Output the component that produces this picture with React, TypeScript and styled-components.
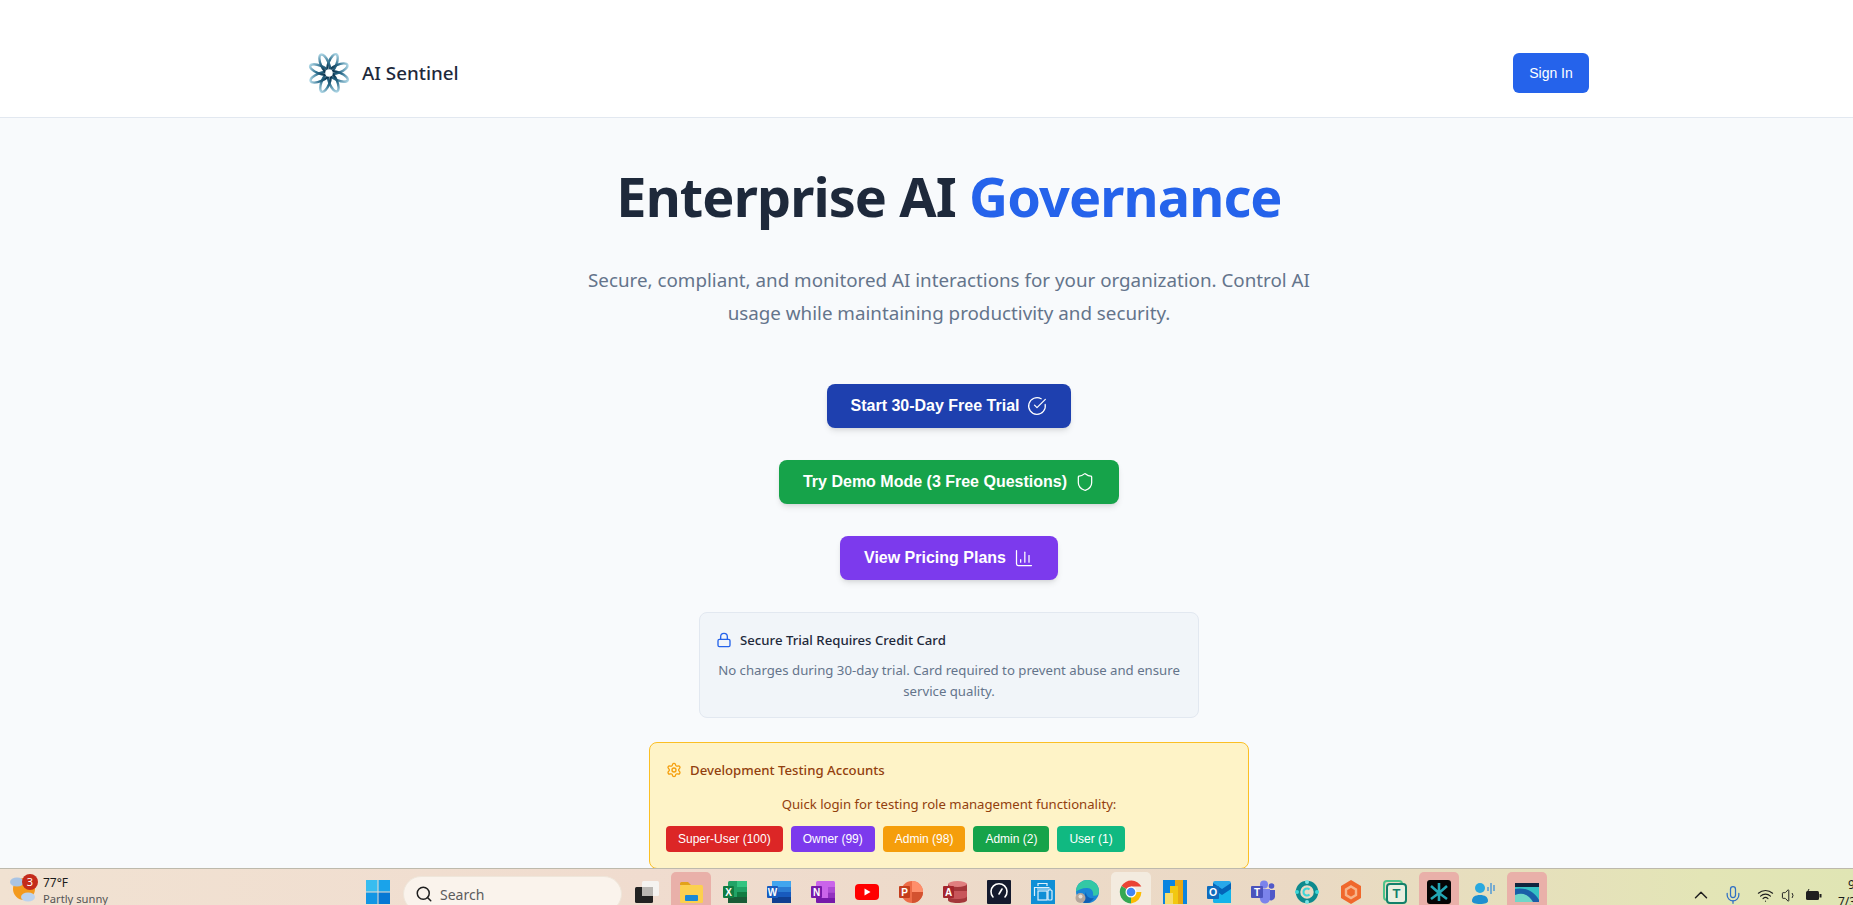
import styled, { createGlobalStyle } from "styled-components";
import {
  CircleCheckBig,
  Shield,
  ChartColumn,
  Lock,
  Settings,
  Search,
  ChevronUp,
  Mic,
  Wifi,
  Volume1,
} from "lucide-react";
import { ReactNode } from "react";

const GlobalStyle = createGlobalStyle`
  html, body {
    margin: 0;
    padding: 0;
    overflow: hidden;
    background: #f8fafc;
  }
  * {
    box-sizing: border-box;
  }
`;

const uiFont = `"Noto Sans", "Open Sans", sans-serif`;
const buttonFont = `"Liberation Sans", Arial, sans-serif`;

const Screen = styled.div`
  height: 905px;
  display: flex;
  flex-direction: column;
  overflow: hidden;
`;

const Viewport = styled.div`
  flex: 1;
  min-height: 0;
  overflow: hidden;
`;

// the captured desktop was wider than the picture, so the page centre sits right of the middle
const Page = styled.div`
  width: 1898px;
  font-family: ${uiFont};
`;

const Header = styled.header`
  height: 118px;
  background: #fff;
  border-bottom: 1px solid #e2e8f0;
  padding: 28px 309px 0 308px;
  display: flex;
  align-items: center;
  justify-content: space-between;
`;

const Brand = styled.div`
  display: flex;
  align-items: center;
  gap: 12px;
`;

const BrandName = styled.span`
  font-size: 18.8px;
  font-weight: 500;
  color: #1e293b;
`;

const SignIn = styled.button`
  width: 76px;
  height: 40px;
  border: 0;
  border-radius: 6px;
  background: #2563eb;
  color: #fff;
  font-family: ${buttonFont};
  font-size: 14px;
`;

const Hero = styled.main`
  display: flex;
  flex-direction: column;
  align-items: center;
  padding-top: 36px;
`;

const Title = styled.h1`
  margin: 0;
  font-size: 54px;
  line-height: 84px;
  letter-spacing: -0.9px;
  font-weight: 700;
  color: #1e293b;
`;

const Accent = styled.span`
  color: #2563eb;
`;

const Lead = styled.p`
  margin: 26px 0 0;
  width: 768px;
  font-size: 18.8px;
  line-height: 33px;
  text-align: center;
  color: #64748b;
`;

const Actions = styled.div`
  margin-top: 54px;
  display: flex;
  flex-direction: column;
  align-items: center;
  gap: 32px;
`;

const CtaButton = styled.button<{ $bg: string }>`
  height: 44px;
  padding: 0 24px;
  border: 0;
  border-radius: 8px;
  background: ${(p) => p.$bg};
  color: #fff;
  font-family: ${buttonFont};
  font-size: 16px;
  font-weight: 700;
  display: flex;
  align-items: center;
  gap: 8px;
  box-shadow: 0 4px 6px -1px rgba(0, 0, 0, 0.1), 0 2px 4px -2px rgba(0, 0, 0, 0.1);
`;

const SecureCard = styled.section`
  margin-top: 32px;
  width: 500px;
  height: 106px;
  padding: 16px;
  background: #f1f5f9;
  border: 1px solid #e2e8f0;
  border-radius: 8px;
`;

const CardTitle = styled.div<{ $color: string }>`
  display: flex;
  align-items: center;
  gap: 8px;
  font-size: 13.2px;
  line-height: 22px;
  font-weight: 500;
  color: ${(p) => p.$color};
`;

const SecureText = styled.p`
  margin: 9px 0 0;
  font-size: 13.2px;
  line-height: 21px;
  text-align: center;
  color: #64748b;
`;

const DevCard = styled.section`
  margin-top: 24px;
  width: 600px;
  height: 127px;
  padding: 16px;
  background: #fef3c7;
  border: 1px solid #fbbf24;
  border-radius: 8px;
`;

const DevText = styled.p`
  margin: 13px 0 0;
  font-size: 13.15px;
  line-height: 20px;
  text-align: center;
  color: #92400e;
`;

const RoleRow = styled.div`
  margin-top: 12px;
  display: flex;
  gap: 8px;
`;

const RoleButton = styled.button<{ $bg: string }>`
  height: 26px;
  padding: 0 12px;
  border: 0;
  border-radius: 4px;
  background: ${(p) => p.$bg};
  color: #fff;
  font-family: ${buttonFont};
  font-size: 12px;
`;

const Taskbar = styled.footer`
  flex: 0 0 37px;
  border-top: 1px solid #bdb9ac;
  background: linear-gradient(90deg, #f1e2d2 0%, #f0dccf 35%, #ead9c4 70%, #e3e5b6 92%, #e0e5b4 100%);
  display: flex;
  align-items: flex-start;
  overflow: hidden;
  font-family: ${uiFont};
`;

const Weather = styled.div`
  position: relative;
  width: 358px;
  padding: 6px 0 0 10px;
  display: flex;
  gap: 7px;
`;

const Badge = styled.span`
  position: absolute;
  left: 22px;
  top: 5px;
  width: 16px;
  height: 16px;
  border-radius: 50%;
  background: #c42b1c;
  color: #fff;
  font-size: 11px;
  line-height: 16px;
  text-align: center;
`;

const WeatherText = styled.div`
  font-size: 12px;
  line-height: 16px;
  color: #1a1a1a;
`;

const WeatherSub = styled.div`
  font-size: 11.2px;
  color: #555;
`;

const Tile = styled.div<{ $tone?: "active" | "light" }>`
  flex: 0 0 40px;
  height: 40px;
  margin-top: 3px;
  padding-top: 8px;
  display: flex;
  justify-content: center;
  align-items: flex-start;
  border-radius: 5px;
  background: ${(p) =>
    p.$tone === "active" ? "#e9b0a9" : p.$tone === "light" ? "#f3ebdf" : "transparent"};
`;

const SearchBox = styled.div`
  flex: 0 0 219px;
  height: 36px;
  margin: 7px 5px 0 5px;
  padding-left: 11px;
  border-radius: 18px;
  background: #faf3ec;
  border: 1px solid #efe6da;
  display: flex;
  align-items: center;
  gap: 7px;
  font-size: 14px;
  color: #5c5c5c;
`;

const AppStrip = styled.div`
  display: flex;
  gap: 4px;
`;

const Tray = styled.div`
  margin-left: auto;
  padding-top: 11px;
  display: flex;
  align-items: center;
  color: #1f1f1f;
`;

const TrayItem = styled.span<{ $width: number; $color?: string }>`
  width: ${(p) => p.$width}px;
  display: flex;
  color: ${(p) => p.$color ?? "inherit"};
`;

const Clock = styled.div`
  width: 15px;
  margin-top: -4px;
  font-size: 12px;
  line-height: 17px;
  white-space: nowrap;
  color: #1a1a1a;
  overflow: hidden;
`;

const ClockTime = styled.div`
  padding-left: 10px;
`;

function LogoMark() {
  const petals = [0, 45, 90, 135, 180, 225, 270, 315];
  return (
    <svg width="42" height="42" viewBox="0 0 42 42" fill="none">
      <defs>
        <radialGradient id="petal" cx="21" cy="21" r="21" gradientUnits="userSpaceOnUse">
          <stop offset="0.15" stopColor="#0d3650" />
          <stop offset="0.55" stopColor="#2f708f" />
          <stop offset="1" stopColor="#b5dcea" />
        </radialGradient>
      </defs>
      {petals.map((a) => (
        <ellipse
          key={a}
          cx="24.500"
          cy="11.500"
          rx="4"
          ry="10"
          stroke="url(#petal)"
          strokeWidth="2.400"
          transform={`rotate(${a} 21 21) rotate(22 24.500 11.500)`}
        />
      ))}
      <circle cx="21" cy="21" r="3.800" fill="#fff" />
    </svg>
  );
}

function Icon({ children }: { children: ReactNode }) {
  return (
    <svg width="24" height="24" viewBox="0 0 24 24">
      {children}
    </svg>
  );
}

const apps: { name: string; tone?: "active" | "light"; art: ReactNode }[] = [
  {
    name: "Task view",
    art: (
      <>
        <rect x="7" y="1" width="17" height="15" rx="1.5" fill="#f5f3f0" />
        <rect x="0" y="7" width="18" height="16" rx="1.5" fill="#222" />
        <rect x="7" y="7" width="11" height="9" fill="#b9b6b2" />
      </>
    ),
  },
  {
    name: "Explorer",
    tone: "active",
    art: (
      <>
        <path d="M1 3.5A1.5 1.5 0 0 1 2.500 2H9l3 3h-11z" fill="#e3a21a" />
        <rect x="1" y="5" width="23" height="18" rx="1.5" fill="#fcd04f" />
        <rect x="6" y="15" width="13" height="6" rx="1" fill="#1a88d6" />
      </>
    ),
  },
  {
    name: "Excel",
    art: (
      <>
        <rect x="5" y="1" width="19" height="22" rx="1.5" fill="#21a366" />
        <rect x="14" y="1" width="10" height="6" fill="#33c481" />
        <rect x="14" y="12" width="10" height="5.500" fill="#107c41" />
        <rect x="5" y="17" width="19" height="6" fill="#185c37" />
        <rect x="0" y="6" width="11" height="12" rx="1" fill="#107c41" />
        <text x="5.500" y="15.500" fontSize="10" fontWeight="700" fill="#fff" textAnchor="middle" fontFamily="Liberation Sans">X</text>
      </>
    ),
  },
  {
    name: "Word",
    art: (
      <>
        <rect x="5" y="1" width="19" height="22" rx="1.5" fill="#2b7cd3" />
        <rect x="5" y="1" width="19" height="6" fill="#41a5ee" />
        <rect x="5" y="12" width="19" height="5.500" fill="#185abd" />
        <rect x="5" y="17" width="19" height="6" fill="#103f91" />
        <rect x="0" y="6" width="11" height="12" rx="1" fill="#185abd" />
        <text x="5.500" y="15.500" fontSize="10" fontWeight="700" fill="#fff" textAnchor="middle" fontFamily="Liberation Sans">W</text>
      </>
    ),
  },
  {
    name: "OneNote",
    art: (
      <>
        <rect x="5" y="1" width="19" height="22" rx="1.5" fill="#ca64ea" />
        <rect x="17" y="7" width="7" height="5.500" fill="#ae4bd5" />
        <rect x="17" y="12.500" width="7" height="5" fill="#9332bf" />
        <rect x="17" y="17.500" width="7" height="5.500" fill="#7719aa" />
        <path d="M5 18h12v5H6.500A1.500 1.500 0 0 1 5 21.500z" fill="#7719aa" />
        <rect x="0" y="6" width="11" height="12" rx="1" fill="#7719aa" />
        <text x="5.500" y="15.500" fontSize="10" fontWeight="700" fill="#fff" textAnchor="middle" fontFamily="Liberation Sans">N</text>
      </>
    ),
  },
  {
    name: "YouTube",
    art: (
      <>
        <rect x="0" y="4" width="24" height="16" rx="4" fill="#f00" />
        <path d="M9.500 8.500v7l6-3.500z" fill="#fff" />
      </>
    ),
  },
  {
    name: "PowerPoint",
    art: (
      <>
        <circle cx="13" cy="12" r="11" fill="#ed6c47" />
        <path d="M13 1a11 11 0 0 1 11 11H13z" fill="#ff8f6b" />
        <path d="M13 12h11a11 11 0 0 1-11 11z" fill="#d35230" />
        <rect x="0" y="6" width="11" height="12" rx="1" fill="#c43e1c" />
        <text x="5.500" y="15.500" fontSize="10" fontWeight="700" fill="#fff" textAnchor="middle" fontFamily="Liberation Sans">P</text>
      </>
    ),
  },
  {
    name: "Access",
    art: (
      <>
        <path d="M5 4v16c0 2 4 3 9.500 3S24 22 24 20V4z" fill="#a4373a" />
        <path d="M5 11v5c0 2 4 3 9.500 3S24 18 24 16v-5z" fill="#c8565a" />
        <ellipse cx="14.500" cy="4" rx="9.500" ry="3" fill="#e07f7f" />
        <rect x="0" y="6" width="11" height="12" rx="1" fill="#a4262c" />
        <text x="5.500" y="15.500" fontSize="10" fontWeight="700" fill="#fff" textAnchor="middle" fontFamily="Liberation Sans">A</text>
      </>
    ),
  },
  {
    name: "Speed",
    art: (
      <>
        <rect x="0" y="0" width="24" height="24" rx="1" fill="#141a2e" />
        <path d="M6 17a8 8 0 1 1 12 0" fill="none" stroke="#fff" strokeWidth="1.600" strokeLinecap="round" />
        <path d="M12 14l3-5" stroke="#fff" strokeWidth="1.600" strokeLinecap="round" />
      </>
    ),
  },
  {
    name: "Print",
    art: (
      <>
        <rect x="0" y="0" width="24" height="24" fill="#0f8fd6" />
        <path d="M7 6V3.500h9V6M3.500 16V7.500h15M6 9h14" fill="none" stroke="#dff1fb" strokeWidth="1.200" />
        <rect x="7" y="11" width="9" height="9" fill="none" stroke="#dff1fb" strokeWidth="1.200" />
        <rect x="17" y="10" width="4" height="10" rx="1" fill="none" stroke="#dff1fb" strokeWidth="1.200" />
      </>
    ),
  },
  {
    name: "Edge",
    art: (
      <>
        <circle cx="12.500" cy="11.500" r="11.500" fill="#1b86d6" />
        <path d="M1 11.500a11.500 11.500 0 0 1 23 0c0 3.500-3 5-6 4 1-5-2.500-8-6.500-7.500-4.500 0-8 2-10.500 3.500z" fill="#33c8a5" />
        <path d="M11 12c0 5 4 7 8 6-2 3-5 5-8 5-2 0-3-.5-4-1z" fill="#0f5fb5" />
        <circle cx="5.500" cy="18" r="5" fill="#b4a69c" />
        <circle cx="5.500" cy="16.500" r="2" fill="#e6ddd5" />
      </>
    ),
  },
  {
    name: "Chrome",
    tone: "light",
    art: (
      <>
        <path d="M12 12L2.500 6A11.500 11.500 0 0 1 22.400 6.500H12z" fill="#ea4335" />
        <path d="M12 12h10.400A11.500 11.500 0 0 1 12 23.500z" fill="#fbbc04" />
        <path d="M12 12v11.500A11.500 11.500 0 0 1 2.500 6z" fill="#34a853" />
        <circle cx="12" cy="12" r="5.500" fill="#fff" />
        <circle cx="12" cy="12" r="4.300" fill="#4285f4" />
      </>
    ),
  },
  {
    name: "Power BI",
    art: (
      <>
        <rect x="0" y="0" width="24" height="24" fill="#0a84e0" />
        <rect x="12" y="0" width="8" height="24" fill="#e8a712" />
        <rect x="7" y="6" width="8" height="18" fill="#f2c811" />
        <rect x="2" y="13" width="8" height="11" fill="#f8dc6a" />
      </>
    ),
  },
  {
    name: "Outlook",
    art: (
      <>
        <rect x="6" y="1" width="18" height="22" rx="2" fill="#28a8ea" />
        <path d="M6 9h18v14H8a2 2 0 0 1-2-2z" fill="#14b3ea" />
        <path d="M6 3l9 6 9-6v6l-9 6-9-6z" fill="#0364b8" />
        <rect x="0" y="6" width="12" height="13" rx="1" fill="#0f6cbd" />
        <text x="6" y="16" fontSize="10.500" fontWeight="700" fill="#fff" textAnchor="middle" fontFamily="Liberation Sans">O</text>
      </>
    ),
  },
  {
    name: "Teams",
    art: (
      <>
        <circle cx="13" cy="4.500" r="4" fill="#7b83eb" />
        <circle cx="20.500" cy="6" r="2.800" fill="#5059c9" />
        <path d="M17 10h7v7a4 4 0 0 1-7 2z" fill="#5059c9" />
        <path d="M7 9h12v9a5 5 0 0 1-10 1z" fill="#7b83eb" />
        <rect x="0" y="6" width="12" height="12" rx="1" fill="#4b53bc" />
        <text x="6" y="15.500" fontSize="10" fontWeight="700" fill="#fff" textAnchor="middle" fontFamily="Liberation Sans">T</text>
      </>
    ),
  },
  {
    name: "Business Central",
    art: (
      <>
        <circle cx="12" cy="12" r="9" fill="none" stroke="#0e8a8e" strokeWidth="4.500" />
        <path d="M8.500 12a3.500 3.500 0 0 1 6-2.500M8.500 12a3.500 3.500 0 0 0 6 2.500" fill="none" stroke="#3ed6d8" strokeWidth="2" />
        <circle cx="12" cy="2" r="2" fill="#7de3e4" />
        <circle cx="12" cy="22" r="2" fill="#7de3e4" />
        <circle cx="2" cy="12" r="2" fill="#3ed6d8" />
        <circle cx="22" cy="12" r="2" fill="#3ed6d8" />
      </>
    ),
  },
  {
    name: "Hexagon",
    art: (
      <>
        <path d="M12 0l10 6v12l-10 6-10-6V6z" fill="#f0682c" />
        <path d="M12 6.500l5 3v5.500l-5 3-5-3V9.500z" fill="none" stroke="#f7b48a" strokeWidth="2.400" />
      </>
    ),
  },
  {
    name: "Tasks",
    art: (
      <>
        <rect x="1" y="1" width="18" height="19" rx="3" fill="none" stroke="#4cc38a" strokeWidth="2" />
        <rect x="4" y="4" width="19" height="19" rx="3" fill="#e9efe0" stroke="#12806a" strokeWidth="2" />
        <text x="13.500" y="18" fontSize="13" fontWeight="700" fill="#12806a" textAnchor="middle" fontFamily="Liberation Sans">T</text>
      </>
    ),
  },
  {
    name: "Cursor",
    tone: "active",
    art: (
      <>
        <rect x="0" y="0" width="24" height="24" rx="3" fill="#050505" />
        <path d="M12 3v18M4 6l8 7 8-7M4 19l8-6 8 6" fill="none" stroke="#23a7b5" strokeWidth="2.600" />
      </>
    ),
  },
  {
    name: "Voice",
    art: (
      <>
        <circle cx="9" cy="8" r="5" fill="#29a9df" />
        <path d="M1 21c0-4 3-6 8-6s8 2 8 6c0 2-3 3-8 3s-8-1-8-3z" fill="#1e90d0" />
        <path d="M17 7v4M20 3v11M23 5v6" stroke="#5c9fd4" strokeWidth="1.600" />
      </>
    ),
  },
  {
    name: "Desktop",
    tone: "active",
    art: (
      <>
        <rect x="0" y="3" width="24" height="19" fill="#1a5fa8" />
        <rect x="0" y="3" width="24" height="4" fill="#10263f" />
        <path d="M0 9c8-2 18 1 24 11v-13H0z" fill="#35c2c4" />
        <path d="M0 15c8-3 14 0 18 7H0z" fill="#6fd6c8" />
      </>
    ),
  },
];

const roles = [
  { label: "Super-User (100)", bg: "#dc2626" },
  { label: "Owner (99)", bg: "#7c3aed" },
  { label: "Admin (98)", bg: "#f59e0b" },
  { label: "Admin (2)", bg: "#16a34a" },
  { label: "User (1)", bg: "#10b981" },
];

export default function App() {
  return (
    <Screen>
      <GlobalStyle />
      <Viewport>
        <Page>
          <Header>
            <Brand>
              <LogoMark />
              <BrandName>AI Sentinel</BrandName>
            </Brand>
            <SignIn>Sign In</SignIn>
          </Header>
          <Hero>
            <Title>
              Enterprise AI <Accent>Governance</Accent>
            </Title>
            <Lead>
              Secure, compliant, and monitored AI interactions for your organization. Control AI
              usage while maintaining productivity and security.
            </Lead>
            <Actions>
              <CtaButton $bg="#1e40af">
                Start 30-Day Free Trial <CircleCheckBig size={20} strokeWidth={1.5} />
              </CtaButton>
              <CtaButton $bg="#16a34a">
                Try Demo Mode (3 Free Questions) <Shield size={20} strokeWidth={1.5} />
              </CtaButton>
              <CtaButton $bg="#7c3aed">
                View Pricing Plans <ChartColumn size={20} strokeWidth={1.5} />
              </CtaButton>
            </Actions>
            <SecureCard>
              <CardTitle $color="#1e293b">
                <Lock size={16} color="#2563eb" />
                Secure Trial Requires Credit Card
              </CardTitle>
              <SecureText>
                No charges during 30-day trial. Card required to prevent abuse and ensure service
                quality.
              </SecureText>
            </SecureCard>
            <DevCard>
              <CardTitle $color="#92400e">
                <Settings size={16} color="#f59e0b" />
                Development Testing Accounts
              </CardTitle>
              <DevText>Quick login for testing role management functionality:</DevText>
              <RoleRow>
                {roles.map((r) => (
                  <RoleButton key={r.label} $bg={r.bg}>
                    {r.label}
                  </RoleButton>
                ))}
              </RoleRow>
            </DevCard>
          </Hero>
        </Page>
      </Viewport>
      <Taskbar>
        <Weather>
          <svg width="26" height="30" viewBox="0 0 26 30">
            <circle cx="14" cy="14" r="11" fill="#f39a1e" />
            <ellipse cx="7" cy="7" rx="7" ry="4.500" fill="#a9c4e4" />
            <ellipse cx="18" cy="22" rx="7" ry="4.500" fill="#bcd3ee" />
          </svg>
          <Badge>3</Badge>
          <WeatherText>
            77°F
            <WeatherSub>Partly sunny</WeatherSub>
          </WeatherText>
        </Weather>
        <Tile>
          <Icon>
            <rect x="0" y="0" width="11.500" height="11.500" fill="#38bdf0" />
            <rect x="12.500" y="0" width="11.500" height="11.500" fill="#1aa3ea" />
            <rect x="0" y="12.500" width="11.500" height="11.500" fill="#1296e4" />
            <rect x="12.500" y="12.500" width="11.500" height="11.500" fill="#0678d4" />
          </Icon>
        </Tile>
        <SearchBox>
          <Search size={18} color="#1f1f1f" />
          Search
        </SearchBox>
        <AppStrip>
          {apps.map((a) => (
            <Tile key={a.name} $tone={a.tone}>
              <Icon>{a.art}</Icon>
            </Tile>
          ))}
        </AppStrip>
        <Tray>
          <TrayItem $width={33}>
            <ChevronUp size={22} strokeWidth={1.6} />
          </TrayItem>
          <TrayItem $width={34} $color="#2f6fc4">
            <Mic size={20} strokeWidth={1.5} />
          </TrayItem>
          <TrayItem $width={24}>
            <Wifi size={17} strokeWidth={1.6} />
          </TrayItem>
          <TrayItem $width={24}>
            <Volume1 size={17} strokeWidth={1.4} />
          </TrayItem>
          <TrayItem $width={33}>
            <svg width="17" height="12" viewBox="0 0 17 12">
              <rect x="1" y="2" width="13" height="9" rx="1.500" fill="#1f1f1f" />
              <rect x="14.500" y="5" width="2" height="3.500" fill="#1f1f1f" />
              <path d="M4 0l-2 4h2l-1 3" fill="none" stroke="#1f1f1f" strokeWidth="1" />
            </svg>
          </TrayItem>
          <Clock>
            <ClockTime>9</ClockTime>
            7/3
          </Clock>
        </Tray>
      </Taskbar>
    </Screen>
  );
}
